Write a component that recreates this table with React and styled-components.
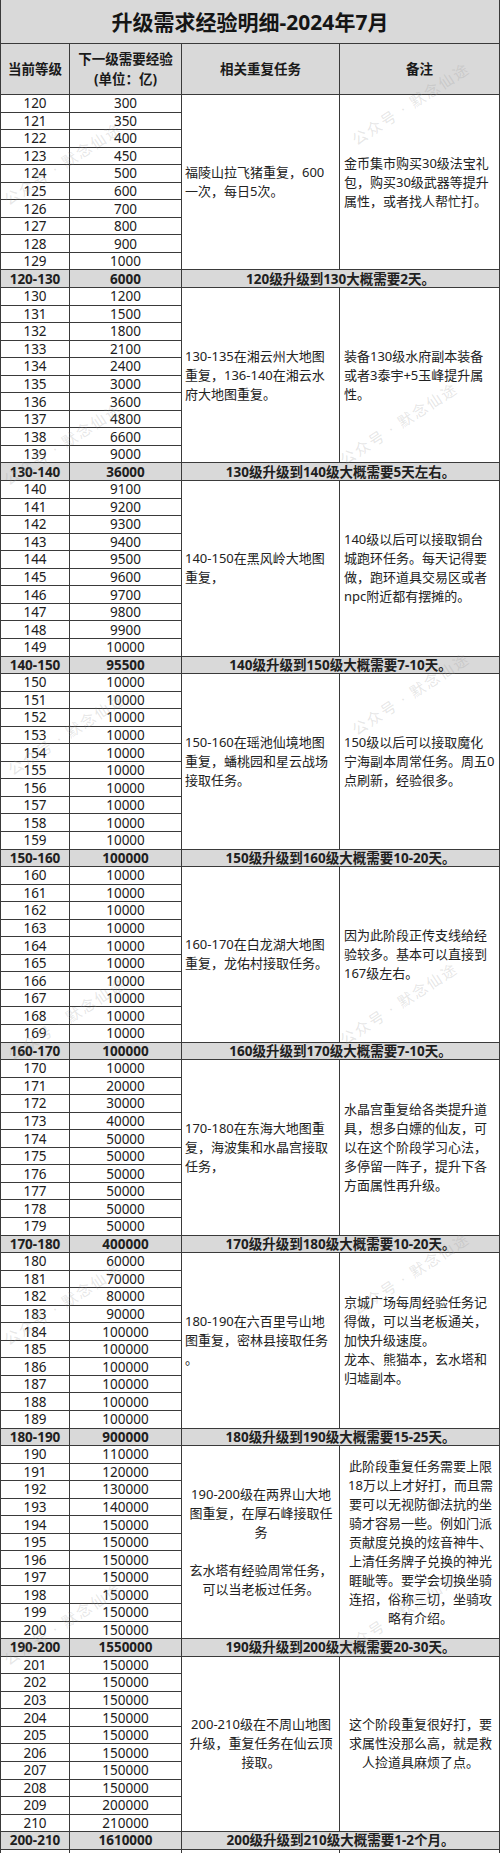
import styled, { createGlobalStyle } from 'styled-components';

const GlobalStyle = createGlobalStyle`
    body {
        margin: 0;
        background: #ffffff;
        font-family: "Noto Sans", "Noto Sans CJK SC", sans-serif;
        color: #1c1c1c;
    }
`;

const line = '#3a3a3a';
const shade = '#d9d9d9';

const groups = [
    {
        levels: range(120, 129),
        exp: [300, 350, 400, 450, 500, 600, 700, 800, 900, 1000],
        task: ['福陵山拉飞猪重复，600', '一次，每日5次。'],
        note: ['金币集市购买30级法宝礼', '包，购买30级武器等提升', '属性，或者找人帮忙打。'],
        sum: ['120-130', '6000', '120级升级到130大概需要2天。'],
    },
    {
        levels: range(130, 139),
        exp: [1200, 1500, 1800, 2100, 2400, 3000, 3600, 4800, 6600, 9000],
        task: ['130-135在湘云州大地图', '重复，136-140在湘云水', '府大地图重复。'],
        note: ['装备130级水府副本装备', '或者3泰宇+5玉峰提升属', '性。'],
        sum: ['130-140', '36000', '130级升级到140级大概需要5天左右。'],
    },
    {
        levels: range(140, 149),
        exp: [9100, 9200, 9300, 9400, 9500, 9600, 9700, 9800, 9900, 10000],
        task: ['140-150在黑风岭大地图', '重复，'],
        note: ['140级以后可以接取铜台', '城跑环任务。每天记得要', '做，跑环道具交易区或者', 'npc附近都有摆摊的。'],
        sum: ['140-150', '95500', '140级升级到150级大概需要7-10天。'],
    },
    {
        levels: range(150, 159),
        exp: Array(10).fill(10000),
        task: ['150-160在瑶池仙境地图', '重复，蟠桃园和星云战场', '接取任务。'],
        note: ['150级以后可以接取魔化', '宁海副本周常任务。周五0', '点刷新，经验很多。'],
        sum: ['150-160', '100000', '150级升级到160级大概需要10-20天。'],
    },
    {
        levels: range(160, 169),
        exp: Array(10).fill(10000),
        task: ['160-170在白龙湖大地图', '重复，龙佑村接取任务。'],
        note: ['因为此阶段正传支线给经', '验较多。基本可以直接到', '167级左右。'],
        sum: ['160-170', '100000', '160级升级到170级大概需要7-10天。'],
    },
    {
        levels: range(170, 179),
        exp: [10000, 20000, 30000, 40000, 50000, 50000, 50000, 50000, 50000, 50000],
        task: ['170-180在东海大地图重', '复，海波集和水晶宫接取', '任务，'],
        note: ['水晶宫重复给各类提升道', '具，想多白嫖的仙友，可', '以在这个阶段学习心法，', '多停留一阵子，提升下各', '方面属性再升级。'],
        sum: ['170-180', '400000', '170级升级到180级大概需要10-20天。'],
    },
    {
        levels: range(180, 189),
        exp: [60000, 70000, 80000, 90000, 100000, 100000, 100000, 100000, 100000, 100000],
        task: ['180-190在六百里号山地', '图重复，密林县接取任务', '。'],
        note: ['京城广场每周经验任务记', '得做，可以当老板通关，', '加快升级速度。', '龙本、熊猫本，玄水塔和', '归墟副本。'],
        sum: ['180-190', '900000', '180级升级到190级大概需要15-25天。'],
    },
    {
        levels: range(190, 200),
        exp: [110000, 120000, 130000, 140000, 150000, 150000, 150000, 150000, 150000, 150000, 150000],
        task: ['190-200级在两界山大地', '图重复，在厚石峰接取任', '务', '', '玄水塔有经验周常任务，', '可以当老板过任务。'],
        note: ['此阶段重复任务需要上限', '18万以上才好打，而且需', '要可以无视防御法抗的坐', '骑才容易一些。例如门派', '贡献度兑换的炫音神牛、', '上清任务牌子兑换的神光', '睚眦等。要学会切换坐骑', '连招，俗称三切，坐骑攻', '略有介绍。'],
        center: true,
        sum: ['190-200', '1550000', '190级升级到200级大概需要20-30天。'],
    },
    {
        levels: range(201, 210),
        exp: [150000, 150000, 150000, 150000, 150000, 150000, 150000, 150000, 200000, 210000],
        task: ['200-210级在不周山地图', '升级，重复任务在仙云顶', '接取。'],
        note: ['这个阶段重复很好打，要', '求属性没那么高，就是救', '人捡道具麻烦了点。'],
        center: true,
        sum: ['200-210', '1610000', '200级升级到210级大概需要1-2个月。'],
    },
];

// faint diagonal watermarks, as they lie over the scanned sheet
const marks = [
    { x: 4, y: 190 }, { x: 352, y: 130 },
    { x: 4, y: 470 }, { x: 340, y: 450 },
    { x: 8, y: 760 }, { x: 352, y: 720 },
    { x: 8, y: 1045 }, { x: 340, y: 1030 },
    { x: 4, y: 1330 }, { x: 352, y: 1300 },
    { x: 4, y: 1650 }, { x: 340, y: 1640 },
];

function range(a, b) {
    const out = [];
    for (let i = a; i <= b; i++) out.push(i);
    return out;
}

const Lines = ({ items }) =>
    items.map((t, i) => (
        <span key={i}>
            {t || '\u00a0'}
            {i < items.length - 1 && <br />}
        </span>
    ));

const App = () => {
    return (
        <>
            <GlobalStyle />
            <Sheet>
                <Title>升级需求经验明细-2024年7月</Title>
                <HeadCell>当前等级</HeadCell>
                <HeadCell>下一级需要经验<br />(单位：亿)</HeadCell>
                <HeadCell>相关重复任务</HeadCell>
                <HeadCell>备注</HeadCell>

                {groups.map((g, gi) => (
                    <Group key={gi} g={g} />
                ))}

                <Cell />
                <Cell />
                <Cell />
                <Cell />

                {marks.map((m, i) => (
                    <Mark key={i} style={{ left: m.x, top: m.y }}>公众号 · 默念仙途</Mark>
                ))}
            </Sheet>
        </>
    );
};

const Group = ({ g }) => {
    const n = g.levels.length;
    return (
        <>
            {g.levels.map((lv, i) => (
                <Row key={lv} lv={lv} exp={g.exp[i]} first={i === 0} g={g} n={n} />
            ))}
            <Cell $sum>{g.sum[0]}</Cell>
            <Cell $sum>{g.sum[1]}</Cell>
            <SumText>{g.sum[2]}</SumText>
        </>
    );
};

const Row = ({ lv, exp, first, g, n }) => (
    <>
        <Cell>{lv}</Cell>
        <Cell>{exp}</Cell>
        {first && (
            <>
                <Note $span={n} $center={g.center} $pad="3px">
                    <div><Lines items={g.task} /></div>
                </Note>
                <Note $span={n} $center={g.center} $pad="4px">
                    <div><Lines items={g.note} /></div>
                </Note>
            </>
        )}
    </>
);

export default App;

const Sheet = styled.div`
    position: relative;
    overflow: hidden;
    box-sizing: border-box;
    width: 500px;
    display: grid;
    grid-template-columns: 69px 112px 158px 160px;
    grid-template-rows: 44px 51px;
    grid-auto-rows: 17.55px;
    border-left: 1px solid ${line};
`;

const Title = styled.div`
    grid-column: 1 / -1;
    box-sizing: border-box;
    display: flex;
    align-items: center;
    justify-content: center;
    background: ${shade};
    border-right: 1px solid ${line};
    border-bottom: 1px solid ${line};
    font-family: "Noto Sans", "Noto Sans CJK SC", sans-serif;
    font-weight: bold;
    font-size: 21px;
    color: #151515;
    padding-bottom: 2px;
`;

const HeadCell = styled.div`
    box-sizing: border-box;
    display: flex;
    align-items: center;
    justify-content: center;
    text-align: center;
    background: ${shade};
    border-right: 1px solid ${line};
    border-bottom: 1px solid ${line};
    font-weight: bold;
    font-size: 13.5px;
    line-height: 20px;
    color: #1a1a1a;
`;

const Cell = styled.div`
    box-sizing: border-box;
    display: flex;
    align-items: center;
    justify-content: center;
    background: ${(p) => (p.$sum ? shade : '#ffffff')};
    border-right: 1px solid ${line};
    border-bottom: 1px solid ${line};
    font-size: 13.5px;
    font-weight: ${(p) => (p.$sum ? 'bold' : 'normal')};
    line-height: 16px;
    color: #202020;
    white-space: nowrap;
`;

const SumText = styled(Cell).attrs({ $sum: true })`
    grid-column: span 2;
`;

const Note = styled.div`
    grid-row: span ${(p) => p.$span};
    box-sizing: border-box;
    display: flex;
    align-items: center;
    justify-content: ${(p) => (p.$center ? 'center' : 'flex-start')};
    text-align: ${(p) => (p.$center ? 'center' : 'left')};
    padding: 0 2px 0 ${(p) => p.$pad};
    background: #ffffff;
    border-right: 1px solid ${line};
    border-bottom: 1px solid ${line};
    font-size: 13px;
    line-height: 19px;
    color: #222222;
    white-space: nowrap;
`;

const Mark = styled.span`
    position: absolute;
    transform: rotate(-33deg);
    transform-origin: left center;
    font-size: 15px;
    letter-spacing: 2px;
    color: rgba(150, 150, 150, 0.24);
    white-space: nowrap;
    pointer-events: none;
`;
